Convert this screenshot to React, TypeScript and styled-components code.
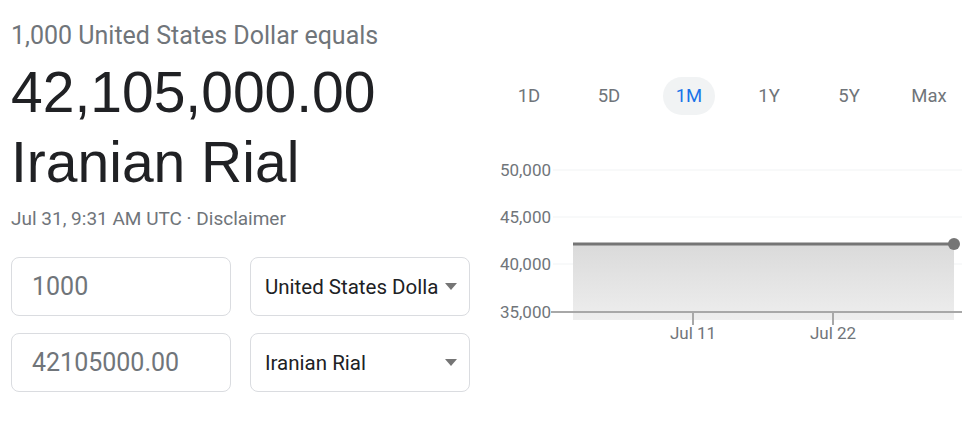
import styled, { createGlobalStyle } from "styled-components";

const GlobalStyle = createGlobalStyle`
  html, body {
    margin: 0;
    padding: 0;
    background: #fff;
  }
  body {
    font-family: Roboto, "Liberation Sans", Arial, sans-serif;
  }
`;

const Page = styled.div`
  display: grid;
  grid-template-columns: 459px 491px;
  column-gap: 19px;
  padding-left: 11px;
  width: 980px;
  height: 425px;
  box-sizing: border-box;
`;

const LeftColumn = styled.section`
  display: flex;
  flex-direction: column;
  padding-top: 21px;
`;

const Caption = styled.div`
  font-size: 25px;
  line-height: 30px;
  color: #70757a;
`;

const BigValue = styled.div`
  margin-top: 6px;
  font-family: "Liberation Sans", Arial, sans-serif;
  font-size: 57px;
  line-height: 70px;
  color: #202124;
`;

const Stamp = styled.div`
  margin-top: 10px;
  font-size: 19px;
  line-height: 24px;
  color: #70757a;
`;

const Form = styled.div`
  margin-top: 26px;
  display: grid;
  grid-template-columns: 220px 220px;
  column-gap: 19px;
  row-gap: 17px;
`;

const Field = styled.div`
  height: 59px;
  box-sizing: border-box;
  border: 1px solid #dadce0;
  border-radius: 8px;
  display: flex;
  align-items: center;
  padding-left: 20px;
  font-size: 25px;
  color: #70757a;
`;

const Picker = styled.div`
  position: relative;
  height: 59px;
  box-sizing: border-box;
  border: 1px solid #dadce0;
  border-radius: 8px;
  display: flex;
  align-items: center;
  padding-left: 14px;
  padding-right: 30px;
  font-size: 20.5px;
  color: #202124;
`;

const PickerLabel = styled.span`
  white-space: nowrap;
  overflow: hidden;
`;

const Caret = styled.span`
  position: absolute;
  right: 12px;
  top: 50%;
  margin-top: -4px;
  width: 0;
  height: 0;
  border-left: 6px solid transparent;
  border-right: 6px solid transparent;
  border-top: 7px solid #757575;
`;

const RightColumn = styled.section`
  display: flex;
  flex-direction: column;
  padding-top: 77px;
`;

const Tabs = styled.div`
  display: grid;
  grid-template-columns: repeat(6, 80px);
  height: 38px;
`;

const Tab = styled.div<{ $active?: boolean }>`
  justify-self: center;
  align-self: center;
  height: 38px;
  padding: 0 13px;
  border-radius: 19px;
  display: flex;
  align-items: center;
  font-size: 18.5px;
  color: ${(p) => (p.$active ? "#1a73e8" : "#70757a")};
  background: ${(p) => (p.$active ? "#f1f3f4" : "transparent")};
`;

const Chart = styled.svg`
  display: block;
  margin-top: 35px;
  font-family: Roboto, "Liberation Sans", Arial, sans-serif;
`;

const periods = ["1D", "5D", "1M", "1Y", "5Y", "Max"];
const yTicks = [
  { label: "50,000", y: 20 },
  { label: "45,000", y: 67 },
  { label: "40,000", y: 114 },
];

const App = () => {
  return (
    <>
      <GlobalStyle />
      <Page>
        <LeftColumn>
          <Caption>1,000 United States Dollar equals</Caption>
          <BigValue>
            42,105,000.00
            <br />
            Iranian Rial
          </BigValue>
          <Stamp>Jul 31, 9:31 AM UTC · Disclaimer</Stamp>
          <Form>
            <Field>1000</Field>
            <Picker>
              <PickerLabel>United States Dollar</PickerLabel>
              <Caret />
            </Picker>
            <Field>42105000.00</Field>
            <Picker>
              <PickerLabel>Iranian Rial</PickerLabel>
              <Caret />
            </Picker>
          </Form>
        </LeftColumn>

        <RightColumn>
          <Tabs>
            {periods.map((p) => (
              <Tab key={p} $active={p === "1M"}>
                {p}
              </Tab>
            ))}
          </Tabs>
          <Chart width="491" height="200" viewBox="0 0 491 200">
            <defs>
              <linearGradient id="area" x1="0" y1="0" x2="0" y2="1">
                <stop offset="0%" stopColor="#dadada" />
                <stop offset="100%" stopColor="#eeeeee" />
              </linearGradient>
            </defs>
            {yTicks.map((t) => (
              <g key={t.label}>
                <line x1="64" x2="473" y1={t.y} y2={t.y} stroke="#f1f3f4" strokeWidth="1" />
                <text x="62" y={t.y + 6} textAnchor="end" fontSize="17" fill="#70757a">
                  {t.label}
                </text>
              </g>
            ))}
            <rect x="84" y="94" width="381" height="76" fill="url(#area)" />
            <line x1="84" x2="465" y1="94" y2="94" stroke="#757575" strokeWidth="3" />
            <circle cx="465" cy="94" r="6" fill="#757575" />
            <line x1="62" x2="473" y1="162" y2="162" stroke="#a8a8a8" strokeWidth="2" />
            <text x="62" y="168" textAnchor="end" fontSize="17" fill="#70757a">
              35,000
            </text>
            <line x1="204" x2="204" y1="162" y2="175" stroke="#a8a8a8" strokeWidth="2" />
            <line x1="344" x2="344" y1="162" y2="175" stroke="#a8a8a8" strokeWidth="2" />
            <text x="204" y="189" textAnchor="middle" fontSize="17" fill="#70757a">
              Jul 11
            </text>
            <text x="344" y="189" textAnchor="middle" fontSize="17" fill="#70757a">
              Jul 22
            </text>
          </Chart>
        </RightColumn>
      </Page>
    </>
  );
};

export default App;
